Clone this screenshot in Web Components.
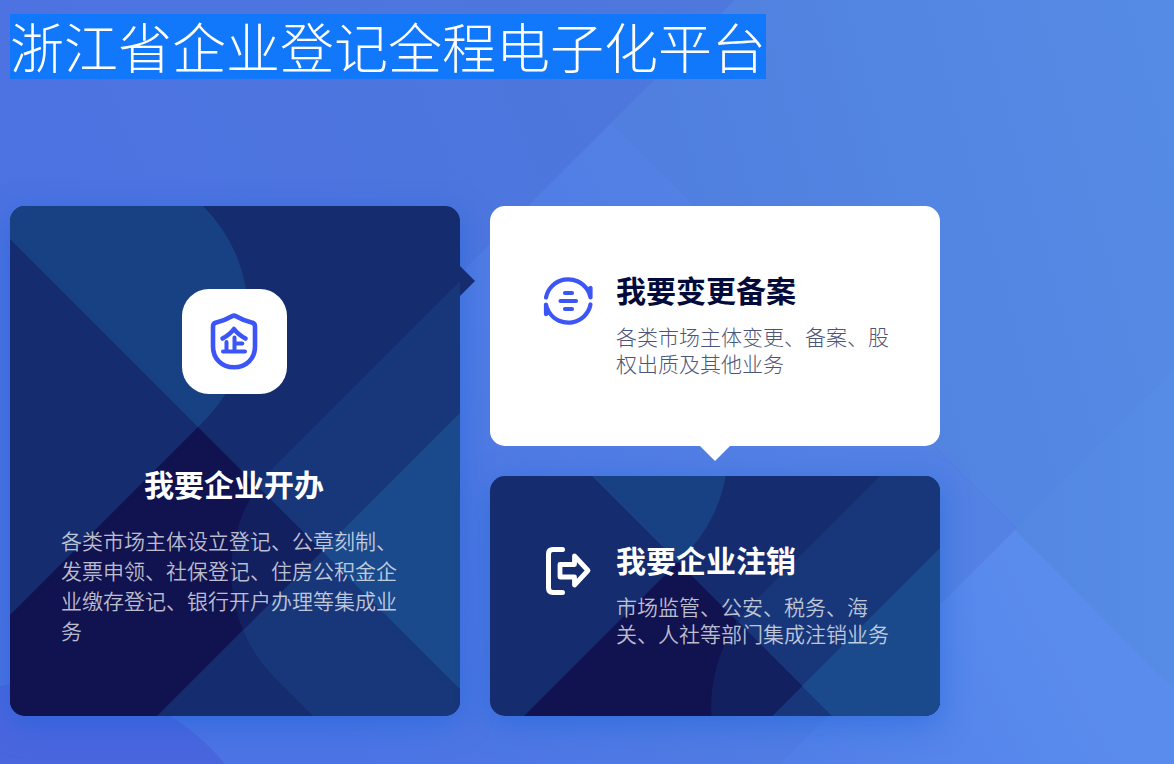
<!DOCTYPE html>
<html lang="zh-CN">
<head>
<meta charset="utf-8">
<title>浙江省企业登记全程电子化平台</title>
<style>
  html, body { margin: 0; min-height: 100%; }
  body { background: #4f78e2; font-family: "Noto Sans CJK SC", sans-serif; }
</style>
</head>
<body>
<portal-page>
  <page-title>浙江省企业登记全程电子化平台</page-title>
  <service-grid>
    <service-card slot="main" variant="tall" pointer="right">
      <shield-icon slot="icon"></shield-icon>
      <span slot="title">我要企业开办</span>
      各类市场主体设立登记、公章刻制、发票申领、社保登记、住房公积金企业缴存登记、银行开户办理等集成业务
    </service-card>
    <service-card variant="light" pointer="bottom">
      <change-icon slot="icon"></change-icon>
      <span slot="title">我要变更备案</span>
      各类市场主体变更、备案、股权出质及其他业务
    </service-card>
    <service-card>
      <exit-icon slot="icon"></exit-icon>
      <span slot="title">我要企业注销</span>
      市场监管、公安、税务、海关、人社等部门集成注销业务
    </service-card>
  </service-grid>
</portal-page>

<script>
function define(name, html) {
  customElements.define(name, class extends HTMLElement {
    constructor() {
      super();
      this.attachShadow({ mode: 'open' }).innerHTML = html;
    }
  });
}

define('portal-page', `
<style>
  :host { display: block; position: relative; overflow: hidden; min-height: 100vh; box-sizing: border-box; padding: 14px 10px 48px; isolation: isolate; }
  .backdrop { position: absolute; inset: 0; width: 100%; height: 100%; z-index: -1; }
  main { display: flex; flex-direction: column; align-items: flex-start; gap: 127px; }
</style>
<svg class="backdrop" viewBox="0 0 1174 764" preserveAspectRatio="xMidYMid slice" aria-hidden="true">
  <defs>
    <linearGradient id="sky" gradientUnits="userSpaceOnUse" x1="0" y1="300" x2="700" y2="0"><stop offset="0" stop-color="#4c72e2"/><stop offset="1" stop-color="#4e78dc"/></linearGradient>
    <linearGradient id="top" gradientUnits="userSpaceOnUse" x1="650" y1="200" x2="1174" y2="60"><stop offset="0" stop-color="#507fdf"/><stop offset="1" stop-color="#568be5"/></linearGradient>
    <linearGradient id="peak" gradientUnits="userSpaceOnUse" x1="250" y1="600" x2="760" y2="300"><stop offset="0" stop-color="#4c74e5"/><stop offset="1" stop-color="#5381e4"/></linearGradient>
    <linearGradient id="side" gradientUnits="userSpaceOnUse" x1="1015" y1="530" x2="1174" y2="530"><stop offset="0" stop-color="#5487e2"/><stop offset="1" stop-color="#568ce6"/></linearGradient>
    <linearGradient id="corner" gradientUnits="userSpaceOnUse" x1="800" y1="740" x2="1060" y2="600"><stop offset="0" stop-color="#5280e9"/><stop offset="1" stop-color="#5a8ced"/></linearGradient>
  </defs>
  <path fill="url(#sky)" d="M0 0H1174V764H0z"/>
  <path fill="url(#top)" d="M735 0H1174V686L611 123z"/>
  <path fill="url(#peak)" d="M611 123L1252 764H-30z"/>
  <path fill="url(#side)" d="M1174 370V689L1015 530z"/>
  <path fill="url(#corner)" d="M1015 530L1174 689V764H780z"/>
  <path fill="#4a66df" d="M0 686A230 230 0 0 1 225 764H0z"/>
</svg>
<main><slot></slot></main>`);

define('page-title', `
<style>
  :host { display: block; }
  h1 { margin: 0; height: 65px; line-height: 64px; font-size: 54px; font-weight: 300; color: #fff; background: #1177fb; white-space: nowrap; }
</style>
<h1><slot></slot></h1>`);

define('service-grid', `
<style>
  :host { display: grid; grid-template-columns: repeat(2, minmax(0, 450px)); grid-template-rows: repeat(2, minmax(240px, auto)); gap: 30px; width: 100%; }
  .main { display: grid; grid-row: span 2; }
</style>
<div class="main"><slot name="main"></slot></div>
<slot></slot>`);

define('card-art', `
<style>
  :host { display: block; position: absolute; inset: 0; border-radius: 15px; overflow: hidden; }
  svg { display: block; width: 100%; height: 100%; }
</style>
<svg viewBox="0 0 450 510" preserveAspectRatio="xMidYMid slice" aria-hidden="true">
  <path fill="#152c6e" d="M0 0H450V510H0z"/>
  <path fill="#184183" d="M0 0H193A152 152 0 0 1 188 221L0 33z"/>
  <path fill="#18377a" d="M450 75L265 260A150 150 0 0 0 265 472L303 510H450z"/>
  <path fill="#1a4a8c" d="M450 207V483L312 345z"/>
  <path fill="#101350" d="M188 221L312 345L147 510H0V409z"/>
  <path fill="#13205f" d="M246 279L312 345L233 424A150 150 0 0 1 246 283z"/>
</svg>`);

define('service-card', `
<style>
  :host { display: block; position: relative; border-radius: 15px; box-shadow: 0 8px 30px rgba(22, 98, 214, .5); color: #fff; }
  a { position: relative; display: flex; height: 100%; box-sizing: border-box; padding: 66px 42px 40px 50px; gap: 20px; color: inherit; text-decoration: none; }
  .icon { flex: none; width: 56px; padding-top: 1px; }
  h2 { margin: 0; font-size: 30px; line-height: 34px; font-weight: 700; white-space: nowrap; }
  p { margin: 17px 0 0; font-size: 21px; line-height: 27px; font-weight: 350; color: rgba(255, 255, 255, .72); }
  :host([variant=light]) { background: #fff; color: #020b3a; box-shadow: none; }
  :host([variant=light]) card-art { display: none; }
  :host([variant=light]) p { font-weight: 300; color: #4c5577; }
  :host([variant=tall]) a { flex-direction: column; align-items: center; padding: 83px 53px 60px 51px; gap: 72px; }
  :host([variant=tall]) .icon { width: auto; padding: 0; }
  :host([variant=tall]) h2 { text-align: center; }
  :host([variant=tall]) p { margin-top: 25px; line-height: 30px; }
  :host([pointer])::after { content: ""; position: absolute; }
  :host([pointer=right])::after { left: 100%; top: 60px; border: 15px solid transparent; border-right: 0; border-left-color: #152c6e; }
  :host([pointer=bottom])::after { z-index: 1; top: 100%; left: calc(50% - 15px); border: 15px solid transparent; border-bottom: 0; border-top-color: #fff; }
</style>
<card-art></card-art>
<a href="#">
  <div class="icon"><slot name="icon"></slot></div>
  <div class="copy"><h2><slot name="title"></slot></h2><p><slot></slot></p></div>
</a>`);

define('shield-icon', `
<style>
  :host { display: grid; place-items: center; width: 105px; height: 105px; border-radius: 27px; background: #fff; }
  svg { display: block; }
</style>
<svg width="60" height="60" viewBox="0 0 60 60" fill="none" stroke="#3b55f6" stroke-width="4.6" stroke-linecap="round" stroke-linejoin="round" aria-hidden="true">
  <path d="M28 4.300Q30 3.100 32 4.300Q39 8.500 48.500 10.700Q51 11.500 51 14.500V34.500C51 46.500 42.500 55.300 30 55.300S9 46.500 9 34.500V14.500Q9 11.500 11.500 10.700Q21 8.500 28 4.300z"/>
  <path d="M18.500 26.500Q26 22.500 30 17Q34 22.500 41.500 26.500"/>
  <path stroke-width="4" d="M30.500 25.500V39M31 31.500H38.300M22.500 30V39M19 39.500H41"/>
</svg>`);

define('change-icon', `
<style>:host, svg { display: block; }</style>
<svg width="56" height="56" viewBox="0 0 56 56" fill="none" stroke="#3b55f6" stroke-width="4.200" stroke-linecap="round" stroke-linejoin="round" aria-hidden="true">
  <path d="M6 24.500A22.700 22.700 0 0 1 47.500 17L50.500 15V24.500Q50 21 47.500 17"/>
  <path d="M50.500 31.500A22.700 22.700 0 0 1 9 39L6 41V31.500Q6.500 35 9 39"/>
  <path d="M25 20H32M20.500 28H36M25 36H32"/>
</svg>`);

define('exit-icon', `
<style>:host, svg { display: block; }</style>
<svg width="56" height="56" viewBox="0 0 56 56" fill="none" stroke="#fff" stroke-width="5" stroke-linecap="round" stroke-linejoin="round" aria-hidden="true">
  <path d="M22.500 6.500H13Q8.500 6.500 8.500 11V45Q8.500 49.500 13 49.500H22.500"/>
  <path stroke-width="4.800" d="M20 21.500H34.500V13L48 27.500L34.500 42V34H20z"/>
</svg>`);
</script>
</body>
</html>
